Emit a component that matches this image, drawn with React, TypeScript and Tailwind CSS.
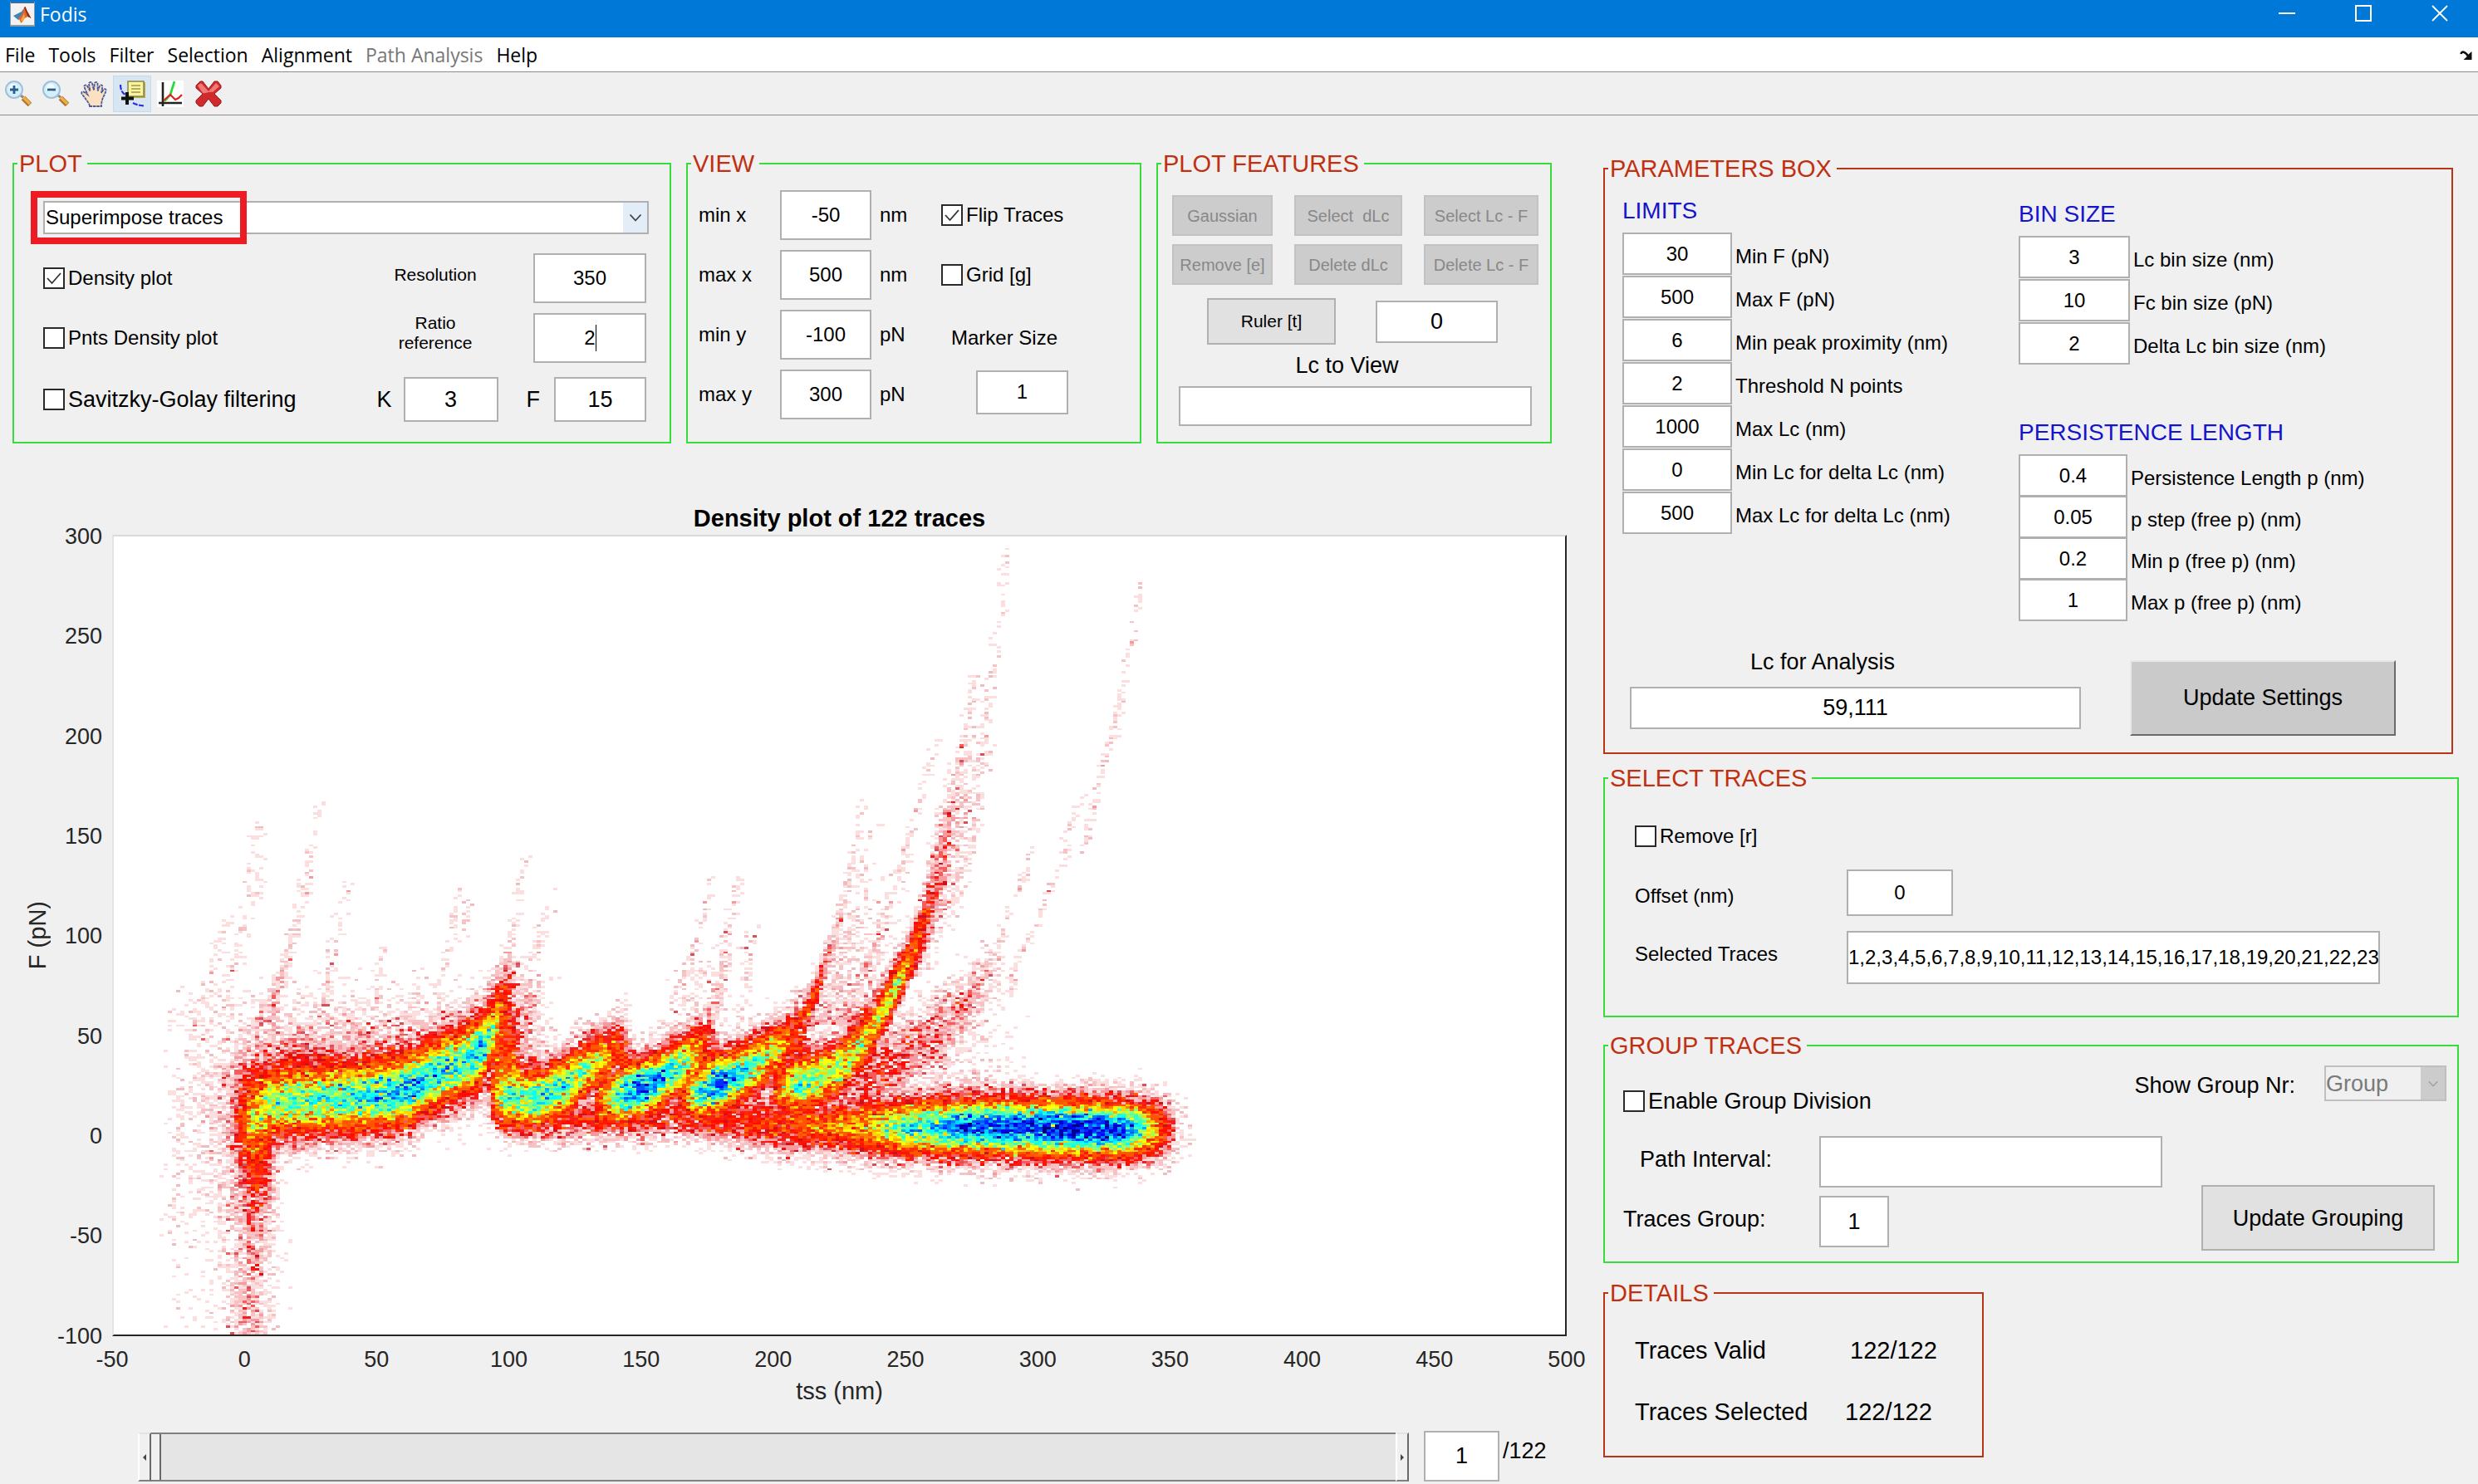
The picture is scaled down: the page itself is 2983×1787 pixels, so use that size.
import { useMemo } from "react";
import type { ReactNode } from "react";

/* ---------- Density map ---------- */

const CELLS = 350;
const X_MIN = -50;
const X_SPAN = 550;
const F_MAX = 300;
const F_SPAN = 400;
const PEAK = 48;

type Knot = [number, number, number];

/* Ridges follow the force as a function of extension: [nm, pN, amplitude]. */
const RIDGES: { sigma: number; knots: Knot[] }[] = [
  { sigma: 10, knots: [[-4, 14, 0.03], [0, 14, 0.16], [5, 15, 0.32], [15, 17, 0.5], [30, 18, 0.53], [45, 19, 0.56], [55, 20, 0.66], [62, 23, 0.66], [70, 29, 0.6], [77, 34, 0.54], [82, 36, 0.54], [88, 41, 0.62], [91, 47, 0.52], [94, 54, 0.38], [97, 62, 0.2], [99, 70, 0.09], [101, 77, 0]] },
  { sigma: 8, knots: [[93, 21, 0.1], [98, 19, 0.34], [103, 17, 0.48], [110, 18, 0.56], [117, 22, 0.58], [122, 26, 0.56], [130, 34, 0.44], [137, 39, 0.32], [140, 43, 0.2], [144, 48, 0.06], [146, 50, 0]] },
  { sigma: 8, knots: [[132, 17, 0.1], [137, 18, 0.36], [143, 20, 0.6], [150, 24, 0.82], [156, 27, 0.72], [163, 33, 0.58], [168, 38, 0.42], [172, 42, 0.28], [174, 46, 0.16], [177, 54, 0]] },
  { sigma: 8, knots: [[164, 20, 0.1], [168, 21, 0.36], [172, 22, 0.54], [180, 26, 0.72], [188, 31, 0.62], [195, 37, 0.5], [200, 42, 0.36], [204, 45, 0.26], [208, 50, 0.18], [212, 57, 0.12], [216, 68, 0.06], [218, 76, 0]] },
  { sigma: 8, knots: [[199, 22, 0.1], [204, 23, 0.32], [208, 24, 0.46], [213, 27, 0.52], [220, 31, 0.46], [226, 35, 0.45], [232, 43, 0.42], [238, 53, 0.33], [243, 66, 0.19], [248, 79, 0.1], [251, 88, 0]] },
  { sigma: 10, knots: [[222, 20, 0.02], [232, 24, 0.07], [241, 31, 0.1], [255, 46, 0.06], [268, 60, 0.04], [280, 75, 0.02], [288, 85, 0]] },
  { sigma: 6, knots: [[95, 9, 0.06], [110, 8, 0.14], [140, 9, 0.14], [160, 9, 0.11], [185, 6, 0.12], [200, 4, 0.15], [215, 4, 0.2], [225, 4, 0.26], [232, 4, 0.3], [240, 4, 0]] },
  { sigma: 8, knots: [[170, 14, 0.03], [185, 10, 0.1], [200, 6, 0.14], [215, 4, 0.14], [230, 4, 0.2], [240, 4, 0.38], [250, 4, 0.54], [265, 4, 0.7], [280, 4, 0.82], [320, 3, 0.9], [333, 3, 0.8], [340, 3, 0.54], [345, 3, 0.34], [349, 3, 0.14], [353, 3, 0.02], [360, 3, 0]] },
];

/* Strands follow the extension as a function of force: [pN, nm, counts]. */
const STRANDS: { sigma: number; knots: Knot[] }[] = [
  { sigma: 4, knots: [[16, 2, 0], [8, 3, 8], [-5, 3.5, 10], [-15, 4, 7], [-30, 4, 4], [-45, 3, 2.4], [-60, 2, 1.8], [-100, 1, 1.6]] },
  { sigma: 7, knots: [[36, -2, 1.6], [0, -2, 1.6], [-50, 0, 0.6], [-100, 1, 0.3]] },
  { sigma: 8, knots: [[80, -12, 0], [60, -12, 0.35], [0, -15, 0.35], [-50, -18, 0.15], [-100, -18, 0.07]] },
  { sigma: 3, knots: [[92, 101, 0.4], [78, 100, 1.6], [60, 100, 4], [30, 98, 7], [12, 97, 6], [0, 97, 0.4]] },
  { sigma: 5, knots: [[80, 108, 0.3], [55, 106, 1.2], [30, 106, 3], [20, 106, 2]] },
  { sigma: 2, knots: [[60, 177, 0.6], [50, 177, 3], [30, 178, 5], [15, 178, 3]] },
  { sigma: 2, knots: [[53, 146, 0.6], [45, 144, 3], [25, 144, 5]] },
  { sigma: 2, knots: [[50, 211, 2], [35, 209, 3], [20, 209, 5]] },
  { sigma: 2, knots: [[158, 4.8, 0.3], [120, 3, 0.4], [100, -2, 0.3], [60, -10, 0.3]] },
  { sigma: 1, knots: [[173, 29, 0.3], [145, 25, 0.5], [125, 23, 0.4], [95, 18, 0.6], [70, 12, 1.2]] },
  { sigma: 1.5, knots: [[132, 39, 0.3], [110, 36, 0.4], [85, 32, 0.5], [65, 30, 0.8]] },
  { sigma: 1.5, knots: [[130, 21, 0.2], [105, 18, 0.4], [75, 12, 1.4], [55, 9, 2]] },
  { sigma: 1.5, knots: [[112, -5, 0.2], [95, -10, 0.4], [60, -18, 0.5], [20, -23, 0.3], [-50, -28, 0.25], [-60, -28, 0]] },
  { sigma: 1, knots: [[95, 52, 0.5], [70, 50, 0.6], [60, 49, 0.6]] },
  { sigma: 1, knots: [[86, 64, 0.3], [65, 63, 0.5]] },
  { sigma: 1, knots: [[125, 82, 0.4], [105, 79, 0.6], [85, 76, 0.7], [62, 73, 0.9]] },
  { sigma: 1, knots: [[118, 85, 0.4], [95, 82, 0.5]] },
  { sigma: 1, knots: [[140, 107, 0.3], [125, 104, 0.5], [95, 101, 0.7], [70, 100, 1.2]] },
  { sigma: 1.5, knots: [[125, 117, 0.2], [105, 113, 0.5], [85, 108, 0.6], [55, 107, 0.8]] },
  { sigma: 1, knots: [[130, 177, 0.3], [112, 174, 0.7], [90, 169, 0.5], [72, 163, 0.5], [55, 158, 0.5]] },
  { sigma: 1.5, knots: [[131, 188, 0.4], [110, 184, 0.5], [85, 181, 0.8], [60, 178, 1.4]] },
  { sigma: 1.5, knots: [[106, 193, 0.3], [80, 190, 0.5], [55, 187, 0.4]] },
  { sigma: 6, knots: [[95, 180, 0.1], [75, 172, 0.4], [55, 168, 0.5]] },
  { sigma: 1.2, knots: [[172, 234, 0.2], [150, 232, 0.4], [130, 229, 0.8], [110, 225, 1.6], [100, 223, 2.4], [85, 219, 4], [72, 216, 6], [60, 212, 7]] },
  { sigma: 3, knots: [[160, 238, 0.1], [130, 235, 0.3], [100, 229, 0.6], [80, 224, 1], [55, 218, 1.4]] },
  { sigma: 4, knots: [[135, 245, 0.1], [105, 241, 0.5], [80, 234, 1], [55, 227, 2]] },
  { sigma: 1.2, knots: [[198, 262, 0.3], [175, 257, 0.5], [156, 253, 0.5], [131, 249, 0.5], [105, 241, 0.5], [80, 235, 0.8]] },
  { sigma: 2, knots: [[205, 275, 0.2], [175, 268, 0.8], [150, 265, 1.8], [125, 261, 3.6], [105, 256.5, 7.5], [90, 252, 12], [78, 248.5, 14], [66, 244, 14], [58, 241, 8], [50, 238, 0]] },
  { sigma: 4, knots: [[200, 276, 0.3], [170, 272, 0.6], [140, 267, 1.2], [110, 261, 1.5], [80, 252, 1]] },
  { sigma: 1.2, knots: [[230, 276, 0.4], [222, 276, 0.6], [195, 271, 0.4], [175, 270, 0.6], [150, 266, 0.7]] },
  { sigma: 1.4, knots: [[299, 289, 0.25], [270, 287, 0.35], [250, 285, 0.35], [230, 283, 0.5], [215, 281, 0.5], [180, 279, 0.6], [165, 278, 0.6], [120, 270, 0.4]] },
  { sigma: 1, knots: [[278, 339, 0.3], [252, 337, 0.4], [229, 333, 0.5], [201, 329, 0.5], [184, 325, 0.6], [169, 322, 0.6], [144, 318, 0.5], [138, 316, 0]] },
  { sigma: 1, knots: [[171, 317, 0.4], [153, 312, 0.5], [140, 310, 0.5], [121, 304, 0.6], [101, 298, 0.7], [86, 292, 0.9], [69, 290, 0.4]] },
  { sigma: 1, knots: [[146, 298, 0.4], [127, 295, 0.5], [105, 288, 0.6], [85, 283, 0.8], [65, 272, 0.8]] },
  { sigma: 6, knots: [[90, 285, 0.1], [70, 275, 0.6], [50, 265, 0.9], [30, 255, 1]] },
  { sigma: 11, knots: [[65, 276, 0.1], [45, 274, 0.25], [20, 268, 0.6]] },
];

function sample(knots: Knot[], at: number): [number, number] | null {
  const dir = knots[knots.length - 1][0] > knots[0][0] ? 1 : -1;
  for (let i = 1; i < knots.length; i += 1) {
    const a = knots[i - 1];
    const b = knots[i];
    if ((at - a[0]) * dir >= 0 && (b[0] - at) * dir >= 0) {
      const t = (at - a[0]) / (b[0] - a[0]);
      return [a[1] + (b[1] - a[1]) * t, a[2] + (b[2] - a[2]) * t];
    }
  }
  return null;
}

const bell = (d: number, s: number) => Math.exp((-d * d) / (2 * s * s));

function makeRandom(seed: number) {
  let s = seed;
  return () => {
    s = (s + 0x6d2b79f5) | 0;
    let t = Math.imul(s ^ (s >>> 15), 1 | s);
    t = (t + Math.imul(t ^ (t >>> 7), 61 | t)) ^ t;
    return ((t ^ (t >>> 14)) >>> 0) / 4294967296;
  };
}

function poisson(lambda: number, random: () => number) {
  const limit = Math.exp(-lambda);
  let k = 0;
  let p = random();
  while (p > limit) {
    k += 1;
    p *= random();
  }
  return k;
}

const LOW = ["", "#fcdede", "#f8c2c4", "#f59a9e", "#f55c5c", "#f41c1c", "#ff0a00", "#ff1400", "#ff2800"];

function colour(n: number, random: () => number) {
  if (n === 1) return random() < 0.12 ? "#efbcc0" : LOW[1];
  if (n < 5) return random() < 0.05 ? "#d8505a" : LOW[n];
  if (n < LOW.length) return random() < 0.1 ? "#d01018" : LOW[n];
  const v = Math.min(1, (n - 8) / (PEAK - 6));
  const level = 1 - Math.round(v ** 0.7 * 24) / 24;
  if (level > 0.85) return `rgb(255,${Math.round(50 + (1 - level) * 400)},0)`;
  const ramp = (c: number) => Math.round(255 * Math.max(0, Math.min(1, 1.5 - Math.abs(4 * level - c))));
  return `rgb(${ramp(3)},${ramp(2)},${ramp(1)})`;
}

function buildDensity() {
  const random = makeRandom(122);
  const paths = new Map<string, string[]>();
  const columns = Array.from({ length: CELLS }, (_, i) => {
    const x = X_MIN + ((i + 0.5) * X_SPAN) / CELLS;
    return { x, ridges: RIDGES.map((r) => sample(r.knots, x)) };
  });
  for (let row = 0; row < CELLS; row += 1) {
    const f = F_MAX - ((row + 0.5) * F_SPAN) / CELLS;
    const strands = STRANDS.map((s) => sample(s.knots, f));
    let runColour = "";
    let runStart = 0;
    const flush = (end: number) => {
      if (!runColour) return;
      const list = paths.get(runColour) ?? [];
      list.push(`M${runStart} ${row}h${end - runStart}v1h${runStart - end}z`);
      paths.set(runColour, list);
    };
    for (let col = 0; col < CELLS; col += 1) {
      const { x, ridges } = columns[col];
      let lambda = 0;
      for (let i = 0; i < ridges.length; i += 1) {
        const hit = ridges[i];
        if (hit) {
          const v = hit[1] * PEAK * bell(f - hit[0], RIDGES[i].sigma);
          lambda = Math.max(lambda, v) + 0.25 * Math.min(lambda, v);
        }
      }
      for (let i = 0; i < strands.length; i += 1) {
        const hit = strands[i];
        if (hit) {
          const d = x - hit[0];
          const s = STRANDS[i].sigma;
          if (Math.abs(d) < 2.4 * s) lambda += hit[1] * bell(d, s);
        }
      }
      if (x > -8 && x < 104) lambda += 2.2 * bell(f - 38, 15) * Math.min(1, (x + 8) / 16);
      const n = lambda > 0.02 ? poisson(lambda, random) : 0;
      const next = n ? colour(n, random) : "";
      if (next !== runColour) {
        flush(col);
        runColour = next;
        runStart = col;
      }
    }
    flush(CELLS);
  }
  return [...paths.entries()].map(([fill, list]) => ({ fill, d: list.join("") }));
}

function DensityMap() {
  const layers = useMemo(buildDensity, []);
  return (
    <svg
      viewBox="0 0 350 350"
      preserveAspectRatio="none"
      shapeRendering="crispEdges"
      className="block h-full w-full"
      role="img"
      aria-label="Density plot of 122 traces"
    >
      {layers.map((l) => (
        <path key={l.fill} fill={l.fill} d={l.d} />
      ))}
    </svg>
  );
}

/* ---------- Shared controls ---------- */

function Panel({ title, tone, className = "", children }: { title: string; tone: string; className?: string; children: ReactNode }) {
  return (
    <fieldset className={`min-w-0 border-2 ${tone} ${className}`}>
      <legend className="ml-1 pr-1.5 pl-0.5 text-[29px] leading-8 whitespace-nowrap text-[#c03010]">{title}</legend>
      {children}
    </fieldset>
  );
}

const GREEN = "border-[#35dc3a]";
const RUST = "border-[#b83418]";

function Field({ id, value = "", label, className = "" }: { id: string; value?: string; label?: string; className?: string }) {
  return (
    <input
      id={id}
      aria-label={label}
      defaultValue={value}
      className={`block min-w-0 rounded-none border-2 border-[#b0b0b0] bg-white p-0 text-center text-black outline-none ${className}`}
    />
  );
}

function Check({ label, checked = false, className = "text-[24px]" }: { label: string; checked?: boolean; className?: string }) {
  return (
    <label className={`flex items-center gap-1 leading-8 whitespace-nowrap ${className}`}>
      <span className="relative block size-[26px] shrink-0">
        <input type="checkbox" defaultChecked={checked} className="peer block size-full appearance-none border-2 border-[#2a2a2a] bg-white" />
        <svg viewBox="0 0 26 26" className="pointer-events-none absolute inset-0 hidden size-full peer-checked:block" aria-hidden="true">
          <path d="M5 13l5.5 6L21 7" fill="none" stroke="#333" strokeWidth="1.8" />
        </svg>
      </span>
      {label}
    </label>
  );
}

/* ---------- Icons ---------- */

function MatlabIcon() {
  return (
    <svg viewBox="0 0 30 30" className="size-[30px]" aria-hidden="true">
      <rect width="30" height="30" fill="#8a9aa8" />
      <rect x="1" y="2" width="28" height="26" fill="#f2f2f2" />
      <rect x="1" y="0" width="28" height="2" fill="#3c6c9c" />
      <path d="M4 17l6-3 4-2 2-3 1 3-4 7-3 3z" fill="#3f83b5" />
      <path d="M10 20l4-4 3-9 1.500-1 2 5 5 9-4-2-4 2-4 6-2-4z" fill="#e0662a" />
      <path d="M17 7l1.500-1 2 5 5 9-4-2z" fill="#8e2a18" />
      <path d="M13 22l4-8 1 5-3 6z" fill="#f4a340" />
    </svg>
  );
}

function ZoomIcon({ plus = false }: { plus?: boolean }) {
  return (
    <svg viewBox="0 0 32 32" className="size-8" aria-hidden="true">
      <path d="M19 18l4 3" stroke="#8a8a8a" strokeWidth="3" />
      <path d="M22 21l8 8" stroke="#a8763a" strokeWidth="6.500" />
      <path d="M22 20l8 8" stroke="#f0b040" strokeWidth="3.500" />
      <circle cx="11" cy="11" r="10" fill="#d5effa" stroke="#9fc0d8" strokeWidth="2" />
      <circle cx="10" cy="9" r="5" fill="#f2fbff" />
      <path d={plus ? "M6 11h10M11 6v10" : "M6 11h10"} stroke="#27608c" strokeWidth="2.800" />
    </svg>
  );
}

function HandIcon() {
  return (
    <svg viewBox="0 0 32 32" className="size-8" aria-hidden="true">
      <path
        d="M11 31c0-3-3-6-5-9l-4.500-6c-1-2 1-3.500 3-2l4 3-4-9c-.8-2.500 2.500-3.500 3.500-1.500l3.500 6-1.500-8.500c0-2.500 3.500-2.800 4-.5l2 8 .8-8c.4-2.200 3.600-2 3.700.3l.2 8.700 2.300-6c.9-2 3.800-1.200 3.300 1.200L25 15l2.500-4c1.200-1.800 3.700-.7 3 1.500-1.500 5-3.500 7-4.500 11-.5 2-1 4-1 7.500z"
        fill="#fde0c0"
        stroke="#4a5a9c"
        strokeWidth="1.800"
        strokeDasharray="3.500 0.800"
      />
    </svg>
  );
}

function CursorIcon() {
  return (
    <svg viewBox="0 0 32 32" className="size-8" aria-hidden="true">
      <path d="M2 5c0 6 2 10 6 12M17 27c4 2 8 3 14 3.500" fill="none" stroke="#2a2ae0" strokeWidth="2.200" strokeDasharray="6 1.500" />
      <rect x="12" y="2" width="20" height="19" fill="#b9ad50" />
      <rect x="11" y="1" width="19" height="18" fill="#f8f4a0" stroke="#8c8440" strokeWidth="1.500" />
      <path d="M15 6h11M15 10h11M15 14h11" stroke="#b4ac60" strokeWidth="1.800" />
      <path d="M10 14v15M3 21.500h15" stroke="#111" strokeWidth="4" />
    </svg>
  );
}

function AxesIcon() {
  return (
    <svg viewBox="0 0 32 32" className="size-8" aria-hidden="true">
      <rect width="32" height="32" fill="#fff" />
      <path d="M7 2v29M2 27h28" stroke="#222" strokeWidth="2.600" />
      <path d="M9 25l7-8 5-16" fill="none" stroke="#1fdc30" strokeWidth="2.600" />
      <path d="M8 24l8-7 6 6 4-2 4-4" fill="none" stroke="#e02020" strokeWidth="2.200" />
    </svg>
  );
}

function CrossIcon() {
  return (
    <svg viewBox="0 0 32 32" className="size-8" aria-hidden="true">
      <path d="M1 6l5-5h3l7 9 7-9h4l4 5v3l-8 7 8 8v3l-4 4h-4l-7-9-7 9H5l-4-4v-3l8-8-8-7z" fill="#cf2a2c" stroke="#a01818" strokeWidth="1" />
      <path d="M3 6l4-3 9 10 9-10 4 4-8 7c-5-1-9 2-12 1z" fill="#f07a78" />
    </svg>
  );
}

/* ---------- Data ---------- */

const MENUS = ["File", "Tools", "Filter", "Selection", "Alignment", "Path Analysis", "Help"];
const Y_TICKS = [300, 250, 200, 150, 100, 50, 0, -50, -100];
const X_TICKS = [-50, 0, 50, 100, 150, 200, 250, 300, 350, 400, 450, 500];
const LIMITS = [
  ["Min F (pN)", "30"],
  ["Max F (pN)", "500"],
  ["Min peak proximity (nm)", "6"],
  ["Threshold N points", "2"],
  ["Max Lc (nm)", "1000"],
  ["Min Lc for delta Lc (nm)", "0"],
  ["Max Lc for delta Lc (nm)", "500"],
];
const BINS = [
  ["Lc bin size (nm)", "3"],
  ["Fc bin size (pN)", "10"],
  ["Delta Lc bin size (nm)", "2"],
];
const PERSISTENCE = [
  ["Persistence Length p (nm)", "0.4"],
  ["p step (free p) (nm)", "0.05"],
  ["Min p (free p) (nm)", "0.2"],
  ["Max p (free p) (nm)", "1"],
];
const VIEW_ROWS = [
  ["min x", "-50", "nm"],
  ["max x", "500", "nm"],
  ["min y", "-100", "pN"],
  ["max y", "300", "pN"],
];

function ParamList({ title, rows, width, gap = "gap-px" }: { title: string; rows: string[][]; width: string; gap?: string }) {
  return (
    <section>
      <h2 className="text-[28px] leading-8 whitespace-nowrap text-[#1414cc]">{title}</h2>
      <div className={`mt-2.5 flex flex-col ${gap}`}>
        {rows.map(([label, value]) => (
          <div key={label} className="flex gap-1 text-[24px]">
            <Field id={label} value={value} className={`h-[51px] ${width}`} />
            <label htmlFor={label} className="pt-1.5 leading-[45px] whitespace-nowrap">
              {label}
            </label>
          </div>
        ))}
      </div>
    </section>
  );
}

/* ---------- Panels ---------- */

function PlotPanel() {
  return (
    <Panel title="PLOT" tone={GREEN}>
      <div className="flex flex-col pt-[29px] pr-[25px] pl-[35px]">
        <div className="relative">
          <select
            aria-label="Plot type"
            className="block h-10 w-full appearance-none rounded-none border-2 border-[#b0b0b0] bg-white pl-px text-[24px] leading-8 text-black"
          >
            <option>Superimpose traces</option>
          </select>
          <span className="pointer-events-none absolute inset-y-0.5 right-0.5 flex w-[29px] items-center justify-center bg-[#e2edf7]">
            <svg viewBox="0 0 16 10" className="h-2.5 w-4" aria-hidden="true">
              <path d="M1.500 1.500l6.500 7 6.500-7" fill="none" stroke="#444" strokeWidth="1.800" />
            </svg>
          </span>
          <span className="pointer-events-none absolute -top-3 -left-[15px] h-16 w-[260px] border-8 border-[#ed1c24]" />
        </div>
        <div className="mt-[23px] flex h-[60px] items-center pr-[3px]">
          <Check label="Density plot" checked />
          <label htmlFor="resolution" className="mr-[34px] ml-auto w-[168px] pb-2 text-center text-[21px]">
            Resolution
          </label>
          <Field id="resolution" value="350" className="h-[60px] w-[136px] text-[24px]" />
        </div>
        <div className="mt-3 flex h-[60px] items-center pr-[3px]">
          <Check label="Pnts Density plot" />
          <label htmlFor="ratio" className="mr-[34px] ml-auto w-[168px] self-start text-center text-[21px] leading-6">
            Ratio
            <br />
            reference
          </label>
          <div className="relative w-[136px]">
            <Field id="ratio" value="2" className="h-[60px] w-full text-[24px]" />
            <span className="pointer-events-none absolute top-3.5 left-[75px] h-8 w-px bg-black" />
          </div>
        </div>
        <div className="mt-[17px] flex h-[54px] items-center pr-[3px] text-[27px]">
          <Check label="Savitzky-Golay filtering" className="text-[27px]" />
          <label htmlFor="k" className="mr-3.5 ml-auto">
            K
          </label>
          <Field id="k" value="3" className="h-[54px] w-[114px]" />
          <label htmlFor="f" className="mr-[17px] ml-[34px]">
            F
          </label>
          <Field id="f" value="15" className="h-[54px] w-[111px]" />
        </div>
      </div>
    </Panel>
  );
}

function ViewPanel() {
  const side = [
    <Check key="flip" label="Flip Traces" checked />,
    <Check key="grid" label="Grid [g]" />,
    <label key="marker" htmlFor="marker" className="ml-3 pt-2">
      Marker Size
    </label>,
    <Field key="size" id="marker" value="1" className="-mt-1.5 ml-[42px] h-[53px] w-[111px]" />,
  ];
  return (
    <Panel title="VIEW" tone={GREEN}>
      <div className="flex flex-col gap-3 pt-4 pl-[13px] text-[24px] leading-8 whitespace-nowrap">
        {VIEW_ROWS.map(([label, value, unit], i) => (
          <div key={label} className="grid grid-cols-[98px_110px_84px_1fr] items-center">
            <label htmlFor={label}>{label}</label>
            <Field id={label} value={value} className="h-[60px]" />
            <span className="pl-2.5">{unit}</span>
            {side[i]}
          </div>
        ))}
      </div>
    </Panel>
  );
}

function FeaturesPanel() {
  const disabled = "h-[49px] border-2 border-[#c2c2c2] bg-[#cccccc] text-[20px] whitespace-pre text-[#888888]";
  return (
    <Panel title="PLOT FEATURES" tone={GREEN}>
      <div className="flex flex-col pt-[22px] pr-3.5 pl-[17px]">
        <div className="grid grid-cols-[121px_130px_138px] justify-between gap-y-2.5">
          {["Gaussian", "Select  dLc", "Select Lc - F", "Remove [e]", "Delete dLc", "Delete Lc - F"].map((t) => (
            <button key={t} type="button" disabled className={disabled}>
              {t}
            </button>
          ))}
        </div>
        <div className="mt-4 flex items-center gap-12 pl-[42px]">
          <button type="button" className="h-14 w-[155px] border-2 border-[#b0b0b0] bg-[#e1e1e1] text-[21px]">
            Ruler [t]
          </button>
          <Field id="ruler" label="Ruler value" value="0" className="h-[51px] w-[147px] text-[27px]" />
        </div>
        <label htmlFor="lcview" className="pr-5 text-center text-[27px] leading-[50px]">
          Lc to View
        </label>
        <Field id="lcview" className="mx-2 h-12" />
      </div>
    </Panel>
  );
}

function PlotArea() {
  return (
    <figure className="mt-[70px] mr-[15px] text-[#262626]">
      <figcaption className="ml-[120px] text-center text-[29px] leading-10 font-bold text-black">Density plot of 122 traces</figcaption>
      <div className="grid grid-cols-[120px_1fr]">
        <div className="flex pl-3.5">
          <div className="flex w-8 items-center justify-center">
            <span className="rotate-180 text-[29px] leading-8 whitespace-nowrap [writing-mode:vertical-rl]">F (pN)</span>
          </div>
          <div className="flex flex-1 flex-col justify-between pt-0.5 pr-3">
            {Y_TICKS.map((t) => (
              <span key={t} className="flex h-0 items-center justify-end text-[27px]">
                {t}
              </span>
            ))}
          </div>
        </div>
        <div className="h-[965px] border-2 border-t-[#dadada] border-r-[#262626] border-b-[#262626] border-l-[#e4e4e4] bg-white">
          <DensityMap />
        </div>
        <div className="col-start-2 mt-3 flex justify-between text-[27px] leading-8">
          {X_TICKS.map((t) => (
            <span key={t} className="flex w-0 justify-center">
              {t}
            </span>
          ))}
        </div>
        <div className="col-start-2 mt-1 text-center text-[29px] leading-9">tss (nm)</div>
      </div>
    </figure>
  );
}

function TraceSlider() {
  const arrow = "flex w-4 items-center justify-center border-2 border-t-[#e3e3e3] border-r-[#696969] border-b-[#808080] border-l-white bg-[#f0f0f0]";
  return (
    <div className="mt-[30px] flex pr-4 pl-[151px] text-[27px]">
      <div className="mt-0.5 flex h-[59px] flex-1">
        <button type="button" aria-label="Previous trace" className={arrow}>
          <svg viewBox="0 0 5 10" className="h-2 w-1" aria-hidden="true">
            <path d="M5 0v10L0 5z" fill="#444" />
          </svg>
        </button>
        <input
          type="range"
          aria-label="Trace"
          min={1}
          max={122}
          defaultValue={1}
          className="h-full min-w-0 flex-1 appearance-none border-y-2 border-[#808080] bg-[#e5e5e5] [&::-webkit-slider-thumb]:h-[55px] [&::-webkit-slider-thumb]:w-3 [&::-webkit-slider-thumb]:appearance-none [&::-webkit-slider-thumb]:border-r-2 [&::-webkit-slider-thumb]:border-[#696969] [&::-webkit-slider-thumb]:bg-[#f0f0f0]"
        />
        <button type="button" aria-label="Next trace" className={arrow}>
          <svg viewBox="0 0 5 10" className="h-2 w-1" aria-hidden="true">
            <path d="M0 0v10l5-5z" fill="#444" />
          </svg>
        </button>
      </div>
      <Field id="trace" label="Trace number" value="1" className="ml-[18px] h-[61px] w-[91px]" />
      <span className="ml-1 w-[76px] pt-1.5 leading-9">/122</span>
    </div>
  );
}

function ParametersPanel() {
  return (
    <Panel title="PARAMETERS BOX" tone={RUST} className="mt-1.5 mr-[7px]">
      <div className="grid grid-cols-[477fr_521fr] pt-[19px] pl-[21px]">
        <ParamList title="LIMITS" rows={LIMITS} width="w-[132px]" />
        <div className="flex flex-col gap-[66px] pt-1">
          <ParamList title="BIN SIZE" rows={BINS} width="w-[134px]" />
          <ParamList title="PERSISTENCE LENGTH" rows={PERSISTENCE} width="w-[131px]" gap="gap-0 -space-y-px" />
        </div>
      </div>
      <div className="mt-[33px] flex items-start justify-between pr-[67px] pb-5 pl-[30px]">
        <div className="w-[543px]">
          <label htmlFor="lcanalysis" className="block pl-[145px] text-[27px] leading-8">
            Lc for Analysis
          </label>
          <Field id="lcanalysis" value="59,111" className="mt-3.5 h-[51px] w-full text-[27px]" />
        </div>
        <button
          type="button"
          className="mt-3.5 h-[91px] w-[320px] border-2 border-t-[#e8e8e8] border-r-[#6a6a6a] border-b-[#6a6a6a] border-l-[#e8e8e8] bg-[#cacaca] text-[27px]"
        >
          Update Settings
        </button>
      </div>
    </Panel>
  );
}

function SelectPanel() {
  const traces = Array.from({ length: 23 }, (_, i) => i + 1).join(",");
  return (
    <Panel title="SELECT TRACES" tone={GREEN} className="mt-[13px]">
      <div className="flex flex-col pt-[38px] pb-[38px] pl-[36px] text-[24px]">
        <Check label="Remove [r]" />
        <div className="mt-6 grid grid-cols-[255px_1fr] items-center">
          <label htmlFor="offset" className="pt-2">
            Offset (nm)
          </label>
          <Field id="offset" value="0" className="h-14 w-[128px]" />
        </div>
        <div className="mt-[18px] grid grid-cols-[255px_1fr] items-center">
          <label htmlFor="selected" className="pb-2">
            Selected Traces
          </label>
          <Field id="selected" value={traces} className="h-16 w-[642px]" />
        </div>
      </div>
    </Panel>
  );
}

function GroupPanel() {
  return (
    <Panel title="GROUP TRACES" tone={GREEN} className="mt-[18px]">
      <div className="flex flex-col pt-2 pr-[13px] pb-[17px] pl-[22px] text-[27px] leading-8">
        <div className="flex items-start">
          <div className="pt-[27px]">
            <Check label="Enable Group Division" className="text-[27px]" />
          </div>
          <label htmlFor="group" className="mr-[35px] ml-auto pt-2">
            Show Group Nr:
          </label>
          <div className="relative w-[147px]">
            <select id="group" disabled className="block h-[43px] w-full appearance-none rounded-none border-2 border-[#bfbfbf] bg-[#f0f0f0] pl-0 text-[#7a7a7a] opacity-100">
              <option>Group</option>
            </select>
            <span className="pointer-events-none absolute inset-y-0.5 right-0.5 flex w-[29px] items-center justify-center bg-[#cccccc]">
              <svg viewBox="0 0 16 10" className="h-2 w-3.5" aria-hidden="true">
                <path d="M1.500 1.500l6.500 7 6.500-7" fill="none" stroke="#a0a0a0" strokeWidth="1.800" />
              </svg>
            </span>
          </div>
        </div>
        <div className="mt-[26px] flex justify-between">
          <div className="grid grid-cols-[236px_413px] gap-y-2.5">
            <label htmlFor="path" className="pt-3 pl-5">
              Path Interval:
            </label>
            <Field id="path" className="h-[62px]" />
            <label htmlFor="tgroup" className="pt-3">
              Traces Group:
            </label>
            <Field id="tgroup" value="1" className="h-[62px] w-[84px]" />
          </div>
          <button type="button" className="mr-3.5 -mb-1 h-[79px] w-[281px] self-end border-2 border-[#b0b0b0] bg-[#e1e1e1]">
            Update Grouping
          </button>
        </div>
      </div>
    </Panel>
  );
}

function DetailsPanel() {
  return (
    <Panel title="DETAILS" tone={RUST} className="mt-5 w-[458px]">
      <dl className="grid grid-cols-[253px_1fr] gap-y-[42px] pt-[37px] pb-[37px] pl-[36px] text-[29px] leading-8">
        <dt>Traces Valid</dt>
        <dd className="pl-1.5">122/122</dd>
        <dt>Traces Selected</dt>
        <dd>122/122</dd>
      </dl>
    </Panel>
  );
}

export default function App() {
  const tool = "flex h-11 w-[46px] items-center justify-center";
  const win = "flex h-8 w-[92px] items-center justify-center";
  return (
    <div className="min-h-screen bg-[#f0f0f0] font-['Liberation_Sans',Arial,sans-serif] text-black">
      <header className="flex h-[45px] items-start bg-[#0078d7] pl-3 font-['Open_Sans','Noto_Sans',sans-serif] text-white">
        <div className="flex items-center gap-1.5 pt-px">
          <MatlabIcon />
          <h1 className="text-[23px] leading-8">Fodis</h1>
        </div>
        <div className="ml-auto flex">
          <button type="button" aria-label="Minimize" className={win}>
            <svg viewBox="0 0 20 20" className="size-5" aria-hidden="true">
              <path d="M0 10h20" stroke="#fff" strokeWidth="2" />
            </svg>
          </button>
          <button type="button" aria-label="Maximize" className={win}>
            <svg viewBox="0 0 20 20" className="size-5" aria-hidden="true">
              <rect x="1" y="1" width="18" height="18" fill="none" stroke="#fff" strokeWidth="2" />
            </svg>
          </button>
          <button type="button" aria-label="Close" className={win}>
            <svg viewBox="0 0 20 20" className="size-5" aria-hidden="true">
              <path d="M1 1l18 18M19 1L1 19" stroke="#fff" strokeWidth="1.800" />
            </svg>
          </button>
        </div>
      </header>

      <nav className="flex h-[42px] items-center gap-4 border-b border-[#8c8c8c] bg-white pt-0.5 pr-1.5 pl-1.5 font-['Open_Sans','Noto_Sans',sans-serif] text-[23px]">
        {MENUS.map((m) => (
          <button key={m} type="button" disabled={m === "Path Analysis"} className="disabled:text-[#777777]">
            {m}
          </button>
        ))}
        <svg viewBox="0 0 15 12" className="ml-auto h-3 w-4" aria-hidden="true">
          <path d="M1 4c1-4 5-3 9 3" fill="none" stroke="#111" strokeWidth="2.600" />
          <path d="M14 1v10H4l3.500-3.200L10.500 4z" fill="#111" />
        </svg>
      </nav>

      <div role="toolbar" aria-label="Tools" className="flex h-[52px] items-center border-b border-[#8c8c8c]">
        <button type="button" aria-label="Zoom in" className="flex h-11 w-11 items-center justify-center">
          <ZoomIcon plus />
        </button>
        <button type="button" aria-label="Zoom out" className={tool}>
          <ZoomIcon />
        </button>
        <button type="button" aria-label="Pan" className={tool}>
          <HandIcon />
        </button>
        <button type="button" aria-label="Data cursor" className="flex h-11 w-[46px] items-center justify-center border border-[#c0dcf3] bg-[#d8e6f2]">
          <CursorIcon />
        </button>
        <button type="button" aria-label="Edit axes" className={tool}>
          <AxesIcon />
        </button>
        <button type="button" aria-label="Delete" className={tool}>
          <CrossIcon />
        </button>
      </div>

      <main className="grid grid-cols-[1886fr_1030fr] gap-x-[29px] pt-[42px] pr-[23px] pl-[15px]">
        <div>
          <div className="grid grid-cols-[793fr_548fr_476fr] gap-x-[18px] pr-[33px] [&>fieldset]:min-h-[353px]">
            <PlotPanel />
            <ViewPanel />
            <FeaturesPanel />
          </div>
          <PlotArea />
          <TraceSlider />
        </div>
        <div>
          <ParametersPanel />
          <SelectPanel />
          <GroupPanel />
          <DetailsPanel />
        </div>
      </main>
    </div>
  );
}
